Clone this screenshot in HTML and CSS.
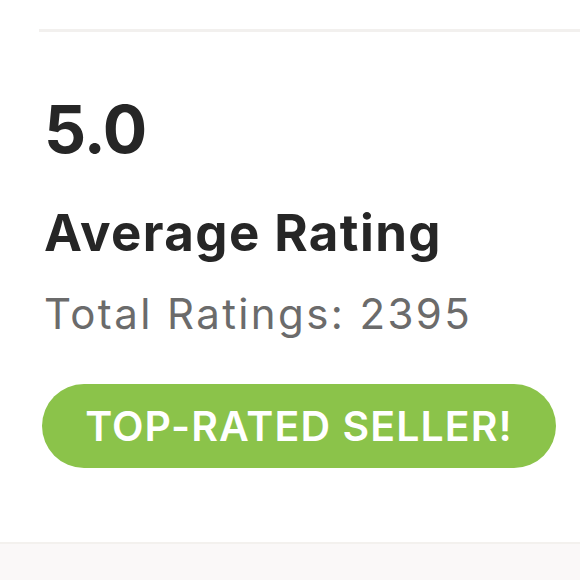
FILE: index.html
```html
<!DOCTYPE html>
<html>
<head>
<meta charset="utf-8">
<link rel="stylesheet" href="styles.css">
</head>
<body>
<div class="page">
  <section class="rating">
    <div class="divider"></div>
    <div class="score">5.0</div>
    <h2 class="title">Average Rating</h2>
    <p class="total">Total Ratings: 2395</p>
    <div class="badge">TOP-RATED SELLER!</div>
  </section>
  <footer class="bottom"></footer>
</div>
</body>
</html>
```
FILE: styles.css
```css
html, body {
  margin: 0;
  padding: 0;
  background: #fff;
}
body {
  font-family: Inter, Lato, sans-serif;
  color: #262626;
}
.page {
  width: 580px;
  height: 580px;
  display: flex;
  flex-direction: column;
  overflow: hidden;
}
.rating {
  height: 542px;
  padding-top: 29px;
  padding-left: 39px;
  box-sizing: border-box;
  display: flex;
  flex-direction: column;
  align-items: flex-start;
}
.divider {
  align-self: stretch;
  height: 3px;
  background: #f2f0ee;
}
.score {
  margin: 64px 0 0 5px;
  font-size: 66px;
  font-weight: 700;
  line-height: 1;
  letter-spacing: -1px;
}
.title {
  margin: 45px 0 0 5px;
  font-size: 51px;
  font-weight: 700;
  line-height: 1;
  letter-spacing: 1.4px;
}
.total {
  margin: 35px 0 0 5px;
  font-size: 42px;
  font-weight: 400;
  line-height: 1;
  color: #6b6b6b;
  letter-spacing: 2.4px;
}
.badge {
  margin: 49px 0 0 3px;
  width: 514px;
  height: 84px;
  box-sizing: border-box;
  border-radius: 42px;
  background: #8bc34a;
  color: #fff;
  font-size: 41px;
  font-weight: 600;
  letter-spacing: 1.1px;
  display: flex;
  align-items: center;
  justify-content: center;
}
.bottom {
  flex: 1;
  background: #faf8f8;
  border-top: 2px solid #f3f1ee;
}
```
